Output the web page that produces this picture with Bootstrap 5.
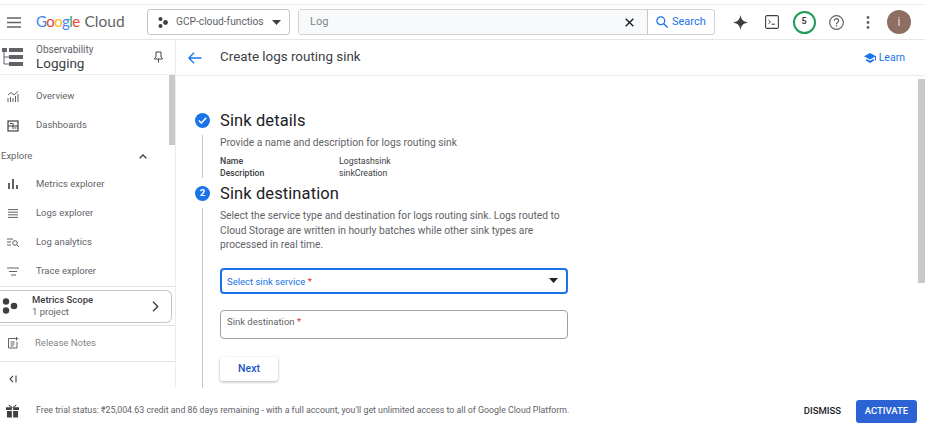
<!DOCTYPE html>
<html lang="en">
<head>
<meta charset="UTF-8">
<title>Create logs routing sink</title>
<link href="https://cdn.jsdelivr.net/npm/bootstrap@5.3.0/dist/css/bootstrap.min.css" rel="stylesheet">
<style>
    html, body { height: 100%; overflow: hidden; background: #fff; }
    body { font-family: Roboto, "Liberation Sans", sans-serif; color: #3c4043; font-size: 10.5px; }
    #page { width: 925px; height: 426px; }

    /* top bar */
    .topbar { height: 36px; margin-top: 4px; border-top: 1px solid #ececec; border-bottom: 1px solid #e6e6e6; padding-left: 7px; }
    .logo-text { font-family: Lato, Roboto, sans-serif; font-size: 15.5px; margin-left: 15px; width: 85px; white-space: nowrap; color: #5f6368; }
    .logo-google { font-size: 15px; letter-spacing: -.6px; margin-right: 1px; }
    .project-pick { width: 143px; height: 26px; margin-left: 26px; border: 1px solid #c4c7c5; border-radius: 3px; padding-left: 10px; font-size: 10.2px; color: #5f6368; }
    .search-wrap { width: 417px; height: 26px; margin-left: 8px; border: 1px solid #d0d2d3; border-radius: 3px; }
    .search-field { width: 349px; background: #f8f9fa; padding-left: 11px; padding-right: 13px; border-right: 1px solid #c4c7c5; color: #80868b; font-size: 11px; }
    .search-go { color: #1a73e8; font-size: 11px; padding-left: 8px; gap: 4px; }
    .top-icons { margin-left: 9px; }
    .icon-slot { width: 32px; }
    .credit-ring { width: 23px; height: 23px; border: 2px solid #1e9e5a; border-radius: 50%; font-size: 9px; font-weight: 700; color: #3c4043; }
    .avatar-i { width: 24px; height: 24px; background: #8d6e63; color: #e8dcd8; border-radius: 50%; font-size: 12px; margin-left: 3px; }

    /* sidebar */
    .app-body { height: 348px; }
    .side { width: 176px; border-right: 1px solid #ededed; }
    .side-head { height: 35px; border-bottom: 1px solid #ededed; padding-left: 2px; padding-right: 12px; }
    .side-title { margin-left: 13px; line-height: 1; padding-top: 1px; }
    .side-title div:first-child { font-size: 10px; color: #5f6368; margin-bottom: 2px; }
    .side-title div:last-child { font-size: 13.5px; color: #3c4043; }
    .side-scroll { position: absolute; left: 169px; top: 0; width: 6px; height: 70px; background: #c9c9c9; }
    .side-item { height: 29px; font-size: 9.5px; color: #5f6368; }
    .side-item svg { margin-left: 7px; margin-right: 17px; flex: none; }
    .explore-row { height: 27px; margin-top: 2.5px; padding-left: 1px; padding-right: 28px; font-size: 9.5px; color: #5f6368; }
    .scope-box { height: 33px; width: 173px; margin-left: -1px; margin-top: 3px; border: 1px solid #c4c7c5; border-left: 0; border-radius: 0 6px 6px 0; padding-left: 3px; padding-right: 12px; }
    .scope-text { margin-left: 14px; line-height: 12px; font-size: 9.5px; }
    .scope-text div:first-child { color: #3c4043; font-weight: 500; }
    .scope-text div:last-child { color: #5f6368; }
    .side-rule { border-top: 1px solid #e4e4e4; }
    .notes-row { height: 35px; font-size: 9.5px; color: #80868b; }
    .notes-row svg { margin-left: 7px; margin-right: 16px; }

    /* main */
    .sub-head { height: 36px; border-bottom: 1px solid #ececec; padding-left: 12px; padding-right: 20px; }
    .sub-title { font-size: 13.4px; color: #3c4043; margin-left: 18px; }
    .learn-link { font-size: 10.5px; color: #1a73e8; gap: 3px; text-decoration: none; margin-top: 1px; }
    .main-pane { height: 311px; }
    .main-scroll { position: absolute; right: 0; top: 3px; width: 7px; height: 204px; background: #c9c9c9; }
    .stepper { padding-left: 19px; padding-top: 37px; }
    .step-mark { width: 17px; flex: none; }
    .step-dot { width: 15px; height: 15px; border-radius: 50%; background: #1a73e8; color: #fff; font-size: 9.5px; font-weight: 700; }
    .step-line { width: 1px; background: #c4c7c5; margin: 0 0 0 7px; }
    .step-body { margin-left: 8px; width: 348px; margin-top: -1px; }
    .step-title { font-size: 16.5px; color: #202124; line-height: 18px; letter-spacing: .1px; }
    .step-desc { color: #5f6368; font-size: 10.25px; line-height: 14.5px; }
    .kv-row { font-size: 8.7px; line-height: 12px; color: #3c4043; }
    .kv-row span:first-child { width: 119px; font-weight: 500; }
    .sink-select { height: 26px; border: 2px solid #1a73e8; border-radius: 4px; padding: 2px 8px 0 5px; color: #1a73e8; font-size: 9.5px; }
    .sink-input { height: 29px; border: 1px solid #9aa0a6; border-radius: 4px; padding: 0 6px 4px; font-size: 9.5px; color: #5f6368; }
    .req { color: #d93025; }
    .next-btn { width: 58px; height: 24px; padding: 0; font-size: 10.5px; font-weight: 500; color: #1a56c4; background: #fff; border: 0; border-radius: 3px; box-shadow: 0 1px 3px rgba(60,64,67,.4); }

    /* footer */
    .trial-bar { height: 38px; padding: 8px 8px 0 6px; }
    .trial-text { margin-left: 17px; font-size: 8.8px; color: #5f6368; }
    .dismiss-txt { font-size: 9.5px; font-weight: 500; color: #202124; }
    .activate-btn { width: 61px; height: 23px; margin-left: 15px; padding: 0; font-size: 9.5px; font-weight: 500; color: #fff; background: #2b63d4; border: 0; border-radius: 3px; }
</style>
</head>
<body>
<div id="page">

    <header class="topbar d-flex align-items-center">
        <svg width="14" height="11" viewBox="0 0 14 11"><path d="M0 1h14M0 5.500h14M0 10h14" stroke="#5f6368" stroke-width="1.400"/></svg>
        <div class="logo-text"><span class="logo-google"><span style="color:#4285f4">G</span><span style="color:#ea4335">o</span><span style="color:#fbbc04">o</span><span style="color:#4285f4">g</span><span style="color:#34a853">l</span><span style="color:#ea4335">e</span></span> Cloud</div>
        <div class="project-pick d-flex align-items-center">
            <svg width="10" height="11" viewBox="0 0 10 11" fill="#3c4043"><circle cx="2.500" cy="2" r="2"/><circle cx="2.500" cy="9" r="2"/><circle cx="7.500" cy="5.500" r="2.400"/></svg>
            <span class="ms-2">GCP-cloud-functios</span>
            <svg class="ms-2" width="9" height="5" viewBox="0 0 9 5"><path d="M0 0h9L4.500 5z" fill="#3c4043"/></svg>
        </div>
        <div class="search-wrap d-flex">
            <div class="search-field d-flex align-items-center justify-content-between">
                <span>Log</span>
                <svg width="9" height="9" viewBox="0 0 9 9"><path d="M.7.7l7.600 7.600M8.300.7L.7 8.300" stroke="#202124" stroke-width="1.400"/></svg>
            </div>
            <div class="search-go d-flex align-items-center">
                <svg width="12" height="12" viewBox="0 0 12 12" fill="none" stroke="#1a73e8" stroke-width="1.300"><circle cx="4.800" cy="4.800" r="3.900"/><path d="M7.700 7.700l3.900 3.900"/></svg>
                <span>Search</span>
            </div>
        </div>
        <div class="top-icons d-flex align-items-center">
            <div class="icon-slot d-flex justify-content-center"><svg width="15" height="15" viewBox="0 0 16 16"><path d="M8 0c.8 4.800 2.600 7 8 8-5.400 1-7.200 3.200-8 8-.8-4.800-2.600-7-8-8 5.400-1 7.200-3.200 8-8z" fill="#3c4043"/></svg></div>
            <div class="icon-slot d-flex justify-content-center"><svg width="14" height="14" viewBox="0 0 14 14" fill="none" stroke="#3c4043"><rect x=".6" y=".6" width="12.800" height="12.800" rx="1.500" stroke-width="1.100"/><path d="M3.500 5l2 1.800-2 1.800M6.500 9.200h3.500" stroke-width="1"/></svg></div>
            <div class="icon-slot d-flex justify-content-center"><div class="credit-ring d-flex align-items-center justify-content-center">5</div></div>
            <div class="icon-slot d-flex justify-content-center"><svg width="15" height="15" viewBox="0 0 15 15" fill="none" stroke="#5f6368"><circle cx="7.500" cy="7.500" r="6.800" stroke-width="1.200"/><path d="M5.400 5.800c0-2.800 4.200-2.800 4.200 0 0 1.700-2.100 1.700-2.100 3.400" stroke-width="1.200"/><circle cx="7.500" cy="11" r=".8" fill="#5f6368" stroke="none"/></svg></div>
            <div class="icon-slot d-flex justify-content-center"><svg width="4" height="13" viewBox="0 0 4 13" fill="#5f6368"><circle cx="2" cy="1.500" r="1.400"/><circle cx="2" cy="6.500" r="1.400"/><circle cx="2" cy="11.500" r="1.400"/></svg></div>
            <div class="avatar-i d-flex align-items-center justify-content-center">i</div>
        </div>
    </header>

    <div class="app-body d-flex">
        <aside class="side position-relative flex-none">
            <div class="side-head d-flex align-items-center">
                <svg width="21" height="20" viewBox="0 0 21 20" fill="#5f6368"><rect x="0" y="1" width="5" height="4"/><rect x="7" y="1" width="14" height="4"/><rect x="7" y="8" width="14" height="4"/><rect x="7" y="15" width="14" height="4"/><path d="M2 5v12h5M2 10h5" fill="none" stroke="#5f6368"/></svg>
                <div class="side-title flex-grow-1"><div>Observability</div><div>Logging</div></div>
                <svg width="9" height="12" viewBox="0 0 9 12" fill="none" stroke="#3c4043"><path d="M2 1h5v5l1.500 1.500v.5h-8v-.5L2 6zM4.500 8v3.500"/></svg>
            </div>
            <div class="position-relative">
                <div class="side-scroll"></div>
                <div style="height:7px"></div>
                <div class="side-item d-flex align-items-center">
                    <svg width="12" height="11" viewBox="0 0 12 11" fill="none" stroke="#5f6368"><path d="M1 11V7M3.500 11V6M6 11V7M8.500 11V5M11 11V3M1 4l3-2.500L7 4l4-3.500"/></svg><span>Overview</span>
                </div>
                <div class="side-item d-flex align-items-center">
                    <svg width="12" height="12" viewBox="0 0 12 12" fill="none" stroke="#3c4043"><rect x="1" y="1" width="10" height="10" stroke-width="1.200"/><path d="M1 6h10M6 3v6M3 3.500h2M7.500 8h2"/></svg><span>Dashboards</span>
                </div>
                <div class="explore-row d-flex align-items-center justify-content-between">
                    <span>Explore</span>
                    <svg width="8" height="5" viewBox="0 0 8 5" fill="none" stroke="#3c4043" stroke-width="1.300"><path d="M.7 4.300L4 1l3.300 3.300"/></svg>
                </div>
                <div class="side-item d-flex align-items-center">
                    <svg width="12" height="10" viewBox="0 0 12 10" fill="#5f6368"><rect x="1" y="4" width="2" height="6"/><rect x="5" y="0" width="2" height="10"/><rect x="9" y="6" width="2" height="4"/></svg><span>Metrics explorer</span>
                </div>
                <div class="side-item d-flex align-items-center">
                    <svg width="12" height="9" viewBox="0 0 12 9" stroke="#5f6368"><path d="M1 .6h10M1 3.200h10M1 5.800h10M1 8.400h10"/></svg><span>Logs explorer</span>
                </div>
                <div class="side-item d-flex align-items-center">
                    <svg width="12" height="9" viewBox="0 0 12 9" fill="none" stroke="#5f6368"><path d="M0 1h6M0 4h4M0 7h4"/><circle cx="8" cy="5" r="2.300"/><path d="M9.700 6.700L12 9"/></svg><span>Log analytics</span>
                </div>
                <div class="side-item d-flex align-items-center">
                    <svg width="12" height="9" viewBox="0 0 12 9" stroke="#5f6368" stroke-width="1.200"><path d="M0 1h12M2 4.500h8M4 8h5"/></svg><span>Trace explorer</span>
                </div>
                <div class="side-rule"></div>
                <div class="scope-box d-flex align-items-center">
                    <svg class="flex-none" width="16" height="16" viewBox="0 0 16 16" fill="#3c4043"><circle cx="4" cy="3.500" r="3.200"/><circle cx="4" cy="12.500" r="3.200"/><circle cx="12" cy="8" r="3.300"/></svg>
                    <div class="scope-text flex-grow-1"><div>Metrics Scope</div><div>1 project</div></div>
                    <svg width="7" height="11" viewBox="0 0 7 11" fill="none" stroke="#3c4043" stroke-width="1.400"><path d="M1 .8l4.700 4.700L1 10.200"/></svg>
                </div>
                <div class="side-rule" style="margin-top:2px"></div>
                <div class="notes-row d-flex align-items-center">
                    <svg width="12" height="12" viewBox="0 0 12 12" fill="none" stroke="#5f6368"><path d="M8 1.500H1.500v9.500h8.500V5M3.500 5h4M3.500 7h4M3.500 9h3M9.500 0v3.500M8 1.700h3.500"/></svg><span>Release Notes</span>
                </div>
                <div class="side-rule"></div>
                <div class="d-flex align-items-center" style="height:35px;padding-left:9px">
                    <svg width="8" height="8" viewBox="0 0 8 8" fill="none" stroke="#3c4043" stroke-width="1.100"><path d="M4 .8L1 4l3 3.200M7 .5v7"/></svg>
                </div>
            </div>
        </aside>

        <main class="flex-grow-1">
            <div class="sub-head d-flex align-items-center">
                <svg width="14" height="12" viewBox="0 0 14 12" fill="none" stroke="#1a73e8" stroke-width="1.300"><path d="M6 .8L.9 6 6 11.200M1 6h12.500"/></svg>
                <span class="sub-title flex-grow-1">Create logs routing sink</span>
                <a class="learn-link d-flex align-items-center" href="#">
                    <svg width="12" height="10" viewBox="0 0 12 10" fill="#1a73e8"><path d="M6 0L0 3.200 6 6.400l5-2.700V7.500h1V3.200zM2.200 5.800v2L6 10l3.800-2.200v-2L6 7.800z"/></svg>
                    <span>Learn</span>
                </a>
            </div>
            <div class="main-pane position-relative">
                <div class="main-scroll"></div>
                <div class="stepper">
                    <div class="d-flex">
                        <div class="step-mark">
                            <div class="step-dot d-flex align-items-center justify-content-center">
                                <svg width="9" height="7" viewBox="0 0 9 7" fill="none" stroke="#fff" stroke-width="1.500"><path d="M.8 3.500l2.500 2.500L8.200.8"/></svg>
                            </div>
                            <div class="step-line" style="height:43px;margin-top:7px"></div>
                        </div>
                        <div class="step-body">
                            <div class="step-title">Sink details</div>
                            <div class="step-desc" style="margin-top:6px">Provide a name and description for logs routing sink</div>
                            <div class="kv-row d-flex" style="margin-top:4px"><span>Name</span><span>Logstashsink</span></div>
                            <div class="kv-row d-flex"><span>Description</span><span>sinkCreation</span></div>
                        </div>
                    </div>
                    <div class="d-flex" style="margin-top:7px">
                        <div class="step-mark">
                            <div class="step-dot d-flex align-items-center justify-content-center">2</div>
                            <div class="step-line" style="height:180px;margin-top:7px"></div>
                        </div>
                        <div class="step-body">
                            <div class="step-title">Sink destination</div>
                            <div class="step-desc" style="margin-top:6.500px">Select the service type and destination for logs routing sink. Logs routed to Cloud Storage are written in hourly batches while other sink types are processed in real time.</div>
                            <div class="sink-select d-flex align-items-center justify-content-between" style="margin-top:15.500px">
                                <span>Select sink service <span class="req">*</span></span>
                                <svg width="9" height="5" viewBox="0 0 9 5" style="margin-top:-3px"><path d="M0 0h9L4.500 5z" fill="#202124"/></svg>
                            </div>
                            <div class="sink-input d-flex align-items-center" style="margin-top:16px">Sink destination&nbsp;<span class="req">*</span></div>
                            <button type="button" class="btn next-btn d-block" style="margin-top:18px">Next</button>
                        </div>
                    </div>
                </div>
            </div>
        </main>
    </div>

    <footer class="trial-bar d-flex align-items-center">
        <svg width="13" height="14" viewBox="0 0 14 14" fill="#3c4043"><path d="M0 3h6.300v3H0zM7.700 3H14v3H7.700zM1 7h5.300v7H1zM7.700 7H13v7H7.700zM3 0l4 3 4-3v1.500L7 3.500 3 1.500z"/></svg>
        <span class="trial-text flex-grow-1">Free trial status: ₹25,004.63 credit and 86 days remaining - with a full account, you'll get unlimited access to all of Google Cloud Platform.</span>
        <span class="dismiss-txt">DISMISS</span>
        <button type="button" class="btn activate-btn">ACTIVATE</button>
    </footer>
</div>
<script src="https://cdn.jsdelivr.net/npm/bootstrap@5.3.0/dist/js/bootstrap.bundle.min.js"></script>
</body>
</html>
